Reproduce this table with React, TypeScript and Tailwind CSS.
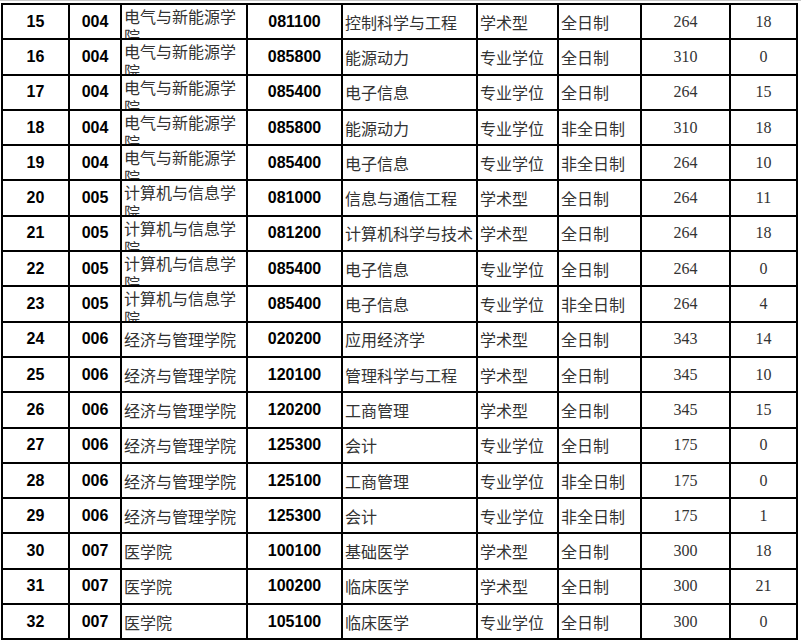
import React from "react";

type Row = [string, string, string, string, string, string, string, string, string];

const rows: Row[] = [
  ["15", "004", "电气与新能源学院", "081100", "控制科学与工程", "学术型", "全日制", "264", "18"],
  ["16", "004", "电气与新能源学院", "085800", "能源动力", "专业学位", "全日制", "310", "0"],
  ["17", "004", "电气与新能源学院", "085400", "电子信息", "专业学位", "全日制", "264", "15"],
  ["18", "004", "电气与新能源学院", "085800", "能源动力", "专业学位", "非全日制", "310", "18"],
  ["19", "004", "电气与新能源学院", "085400", "电子信息", "专业学位", "非全日制", "264", "10"],
  ["20", "005", "计算机与信息学院", "081000", "信息与通信工程", "学术型", "全日制", "264", "11"],
  ["21", "005", "计算机与信息学院", "081200", "计算机科学与技术", "学术型", "全日制", "264", "18"],
  ["22", "005", "计算机与信息学院", "085400", "电子信息", "专业学位", "全日制", "264", "0"],
  ["23", "005", "计算机与信息学院", "085400", "电子信息", "专业学位", "非全日制", "264", "4"],
  ["24", "006", "经济与管理学院", "020200", "应用经济学", "学术型", "全日制", "343", "14"],
  ["25", "006", "经济与管理学院", "120100", "管理科学与工程", "学术型", "全日制", "345", "10"],
  ["26", "006", "经济与管理学院", "120200", "工商管理", "学术型", "全日制", "345", "15"],
  ["27", "006", "经济与管理学院", "125300", "会计", "专业学位", "全日制", "175", "0"],
  ["28", "006", "经济与管理学院", "125100", "工商管理", "专业学位", "非全日制", "175", "0"],
  ["29", "006", "经济与管理学院", "125300", "会计", "专业学位", "非全日制", "175", "1"],
  ["30", "007", "医学院", "100100", "基础医学", "学术型", "全日制", "300", "18"],
  ["31", "007", "医学院", "100200", "临床医学", "学术型", "全日制", "300", "21"],
  ["32", "007", "医学院", "105100", "临床医学", "专业学位", "全日制", "300", "0"],
];

const cjk = "font-['Noto_Sans_CJK_SC','Noto_Sans',sans-serif]";

export default function App() {
  return (
    <div className="w-[801px] h-[642px] bg-white overflow-hidden relative">
      <div className="h-[1px] bg-[#c8c8c8]" />
      <div className="h-[2px]" />
      <div className="ml-[1px] w-[797px] bg-black p-[2px] grid gap-[2px] grid-cols-[65px_50px_124px_93px_133px_79px_81px_87px_65px] auto-rows-[33.3px]">
        {rows.map((r) => {
          const wrap = r[2].length > 7;
          return (
            <React.Fragment key={r[0]}>
              <div className="bg-white flex items-center justify-center font-['Liberation_Sans',sans-serif] font-bold text-[16px] text-black">
                {r[0]}
              </div>
              <div className="bg-white flex items-center justify-center font-['Liberation_Sans',sans-serif] font-bold text-[16px] text-black">
                {r[1]}
              </div>
              <div
                className={`bg-white overflow-hidden flex pl-[2px] text-[16px] leading-[20px] text-[#333] ${cjk} ${
                  wrap ? "items-start pt-[1px]" : "items-center"
                }`}
              >
                <span className="block w-[116px] break-all">{r[2]}</span>
              </div>
              <div className="bg-white flex items-center justify-center font-['Liberation_Sans',sans-serif] font-bold text-[16px] text-black">
                {r[3]}
              </div>
              <div className={`bg-white flex items-center pl-[2px] text-[16px] text-[#333] whitespace-nowrap overflow-hidden ${cjk}`}>
                {r[4]}
              </div>
              <div className={`bg-white flex items-center pl-[2px] text-[16px] text-[#333] whitespace-nowrap overflow-hidden ${cjk}`}>
                {r[5]}
              </div>
              <div className={`bg-white flex items-center pl-[2px] text-[16px] text-[#333] whitespace-nowrap overflow-hidden ${cjk}`}>
                {r[6]}
              </div>
              <div className="bg-white flex items-center justify-center font-['Liberation_Serif',serif] text-[16px] text-[#333]">
                {r[7]}
              </div>
              <div className="bg-white flex items-center justify-center font-['Liberation_Serif',serif] text-[16px] text-[#333]">
                {r[8]}
              </div>
            </React.Fragment>
          );
        })}
      </div>
    </div>
  );
}
